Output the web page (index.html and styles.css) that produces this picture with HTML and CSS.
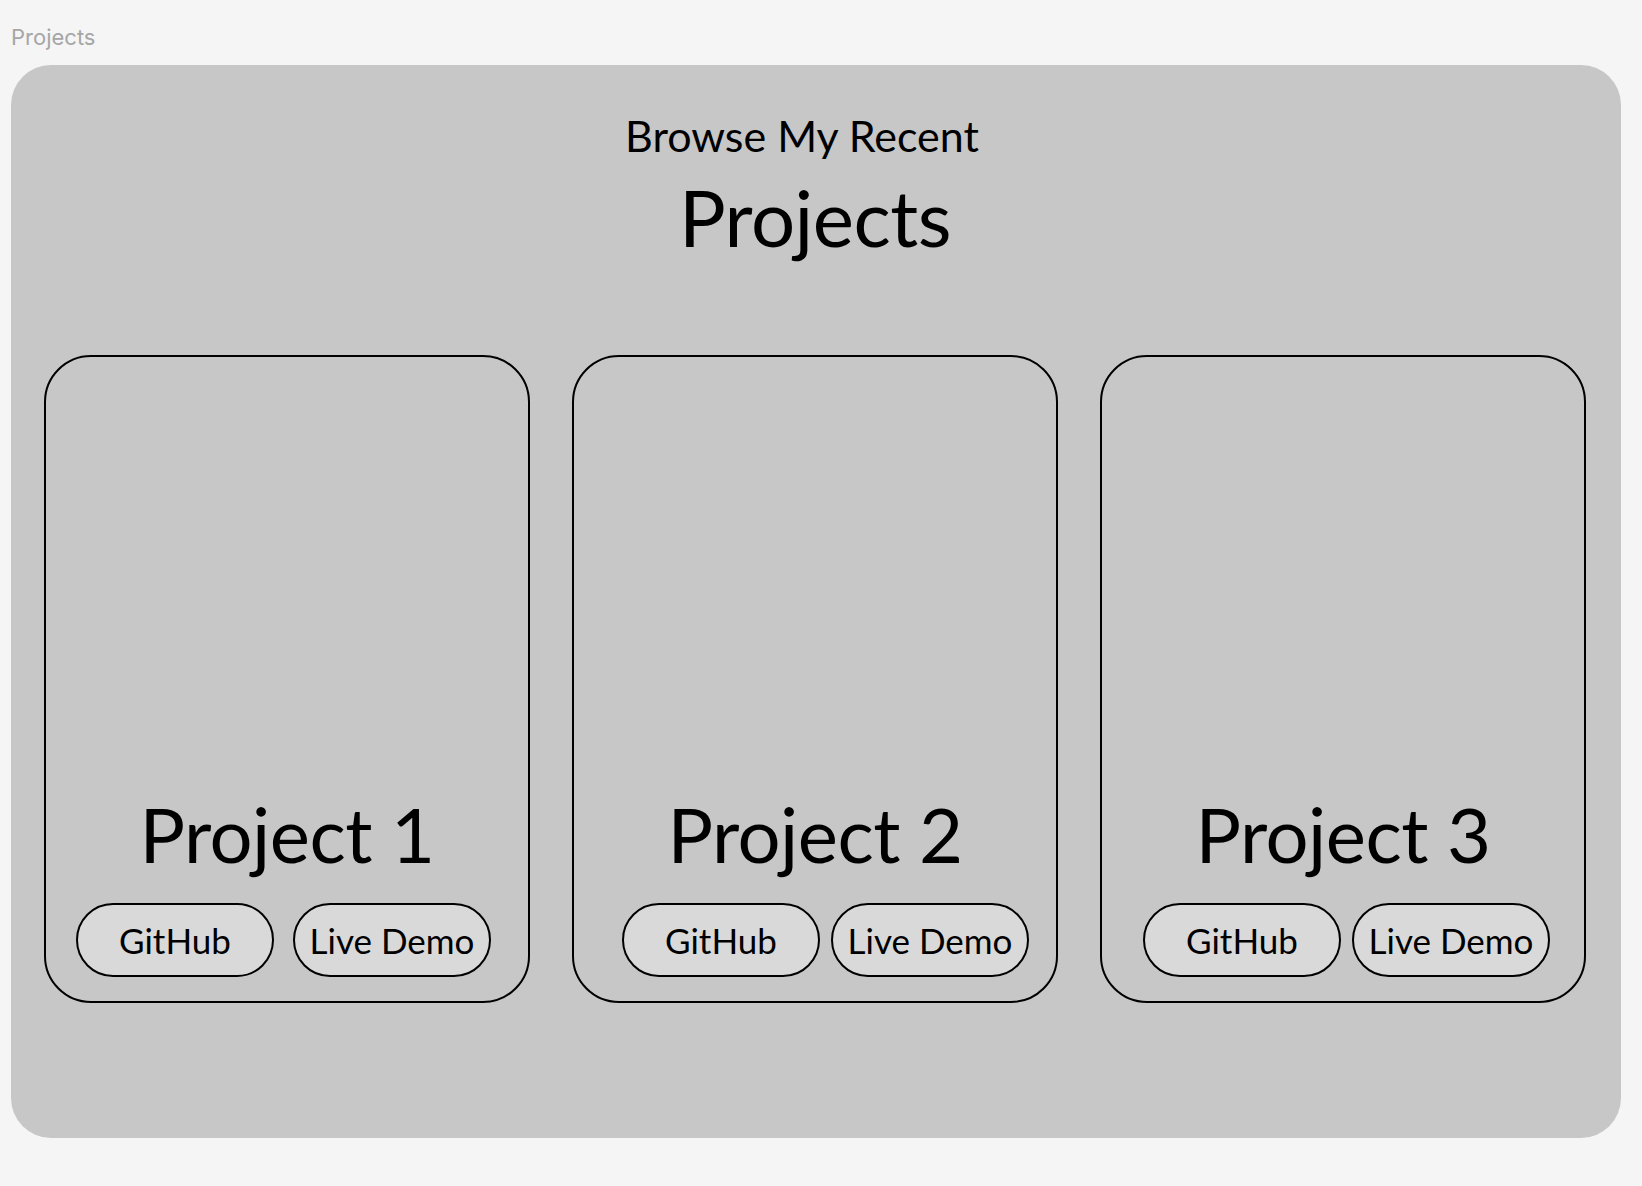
FILE: index.html
```html
<!DOCTYPE html>
<html lang="en">
<head>
    <meta charset="UTF-8">
    <meta name="viewport" content="width=device-width, initial-scale=1.0">
    <title>Projects</title>
    <link rel="stylesheet" href="styles.css">
</head>
<body>
<div class="frame-label">Projects</div>

<section id="projects">
    <div class="projects-head">
        <p class="projects-sub">Browse My Recent</p>
        <h1 class="projects-title">Projects</h1>
    </div>

    <div class="project-list">
        <div class="project-card">
            <h2>Project 1</h2>
            <div class="project-links links-1">
                <button class="btn">GitHub</button>
                <button class="btn">Live Demo</button>
            </div>
        </div>
        <div class="project-card">
            <h2>Project 2</h2>
            <div class="project-links links-2">
                <button class="btn">GitHub</button>
                <button class="btn">Live Demo</button>
            </div>
        </div>
        <div class="project-card">
            <h2>Project 3</h2>
            <div class="project-links links-3">
                <button class="btn">GitHub</button>
                <button class="btn">Live Demo</button>
            </div>
        </div>
    </div>
</section>
</body>
</html>
```

FILE: styles.css
```css
body {
    margin: 0;
    padding: 24px 21px 48px 11px;
    background: #f5f5f5;
    font-family: 'Lato', sans-serif;
    color: #000;
}

.frame-label {
    font-family: 'Inter', sans-serif;
    font-size: 22px;
    line-height: 26px;
    color: #a6a6a6;
    margin-bottom: 15px;
}

#projects {
    background: #c7c7c7;
    border-radius: 40px;
    height: 1073px;
    box-sizing: border-box;
    padding: 49px 35px 0 33px;
}

.projects-head {
    text-align: center;
}

.projects-sub {
    margin: 0;
    padding-right: 26px; /* sits a little left of center in the mockup */
    font-size: 43px;
    line-height: 1;
}

.projects-title {
    margin: 21px 0 0;
    font-size: 78px;
    font-weight: 400;
    line-height: 1;
    letter-spacing: -0.5px;
}

.project-list {
    display: flex;
    gap: 42px;
    margin-top: 99px;
}

.project-card {
    flex: 1;
    height: 648px;
    box-sizing: border-box;
    border: 2px solid #000;
    border-radius: 47px;
    display: flex;
    flex-direction: column;
    justify-content: flex-end;
    align-items: center;
    padding-bottom: 24px;
}

.project-card h2 {
    margin: 0 0 31px;
    font-size: 76px;
    font-weight: 400;
    line-height: 1;
    letter-spacing: -0.5px;
}

.project-links {
    align-self: stretch;
    display: flex;
    gap: 11px;
}

/* spacing differs a bit per card in the mockup */
.links-1 {
    gap: 19px;
    padding-left: 30px;
}

.links-2 {
    padding-left: 48px;
}

.links-3 {
    padding-left: 41px;
}

.btn {
    width: 198px;
    height: 74px;
    background: #d9d9d9;
    border: 2px solid #000;
    border-radius: 37px;
    font-family: 'Lato', sans-serif;
    font-size: 35px;
    color: #000;
    padding: 0;
    cursor: pointer;
}
```
